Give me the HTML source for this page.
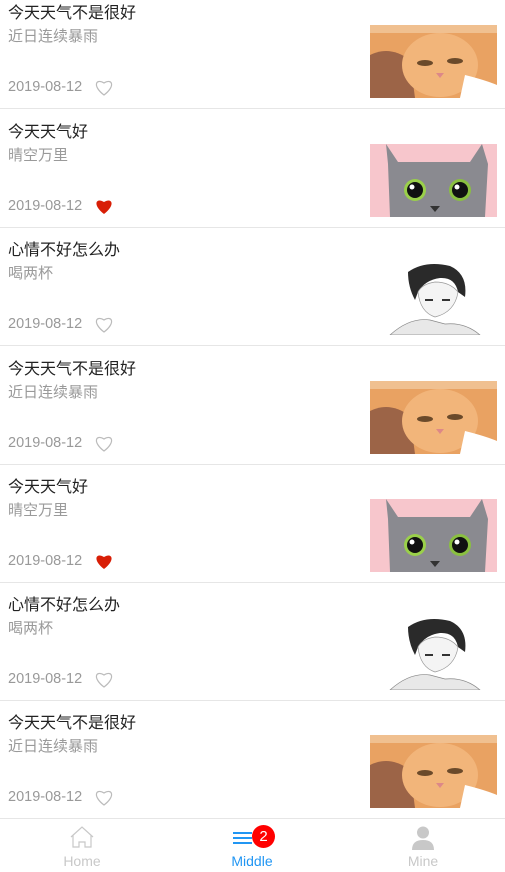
<!DOCTYPE html>
<html><head><meta charset="utf-8"><style>
*{margin:0;padding:0;box-sizing:border-box}
body{width:505px;height:872px;overflow:hidden;background:#fff;font-family:"Liberation Sans","Noto Sans CJK SC",sans-serif;position:relative}
.it{position:absolute;left:0;width:505px;height:118px;border-bottom:1px solid #e6e6e6}
.t{position:absolute;left:8px;top:12px;font-size:16px;color:#222;line-height:22px}
.s{position:absolute;left:8px;top:36px;font-size:15px;color:#9a9a9a;line-height:20px}
.d{position:absolute;left:8px;top:87px;font-size:14.5px;color:#999;line-height:18px}
.h{position:absolute;left:94px;top:87px;width:20px;height:18px}
.im{position:absolute;left:370px;top:34px;width:127px;height:73px}
.tab{position:absolute;top:818px;left:0;width:505px;height:54px;border-top:1px solid #e6e6e6;background:#fff}
.tl{position:absolute;top:34px;font-size:14px;width:120px;text-align:center}
</style></head><body>
<svg width="0" height="0" style="position:absolute">
<defs>
<symbol id="ca" viewBox="0 0 127 73"><rect width="127" height="73" fill="#e9a262"/><path d="M0 30 Q20 20 40 35 L45 73 L0 73Z" fill="#9c6447"/><ellipse cx="70" cy="40" rx="38" ry="32" fill="#f2b57a"/><path d="M95 50 Q115 55 127 60 L127 73 L90 73Z" fill="#fff"/><ellipse cx="55" cy="38" rx="8" ry="3" fill="#6b4a2a"/><ellipse cx="85" cy="36" rx="8" ry="3" fill="#6b4a2a"/><path d="M66 48 L74 48 L70 53Z" fill="#d88"/><rect x="0" y="0" width="127" height="8" fill="#f0c090"/></symbol>
<symbol id="cb" viewBox="0 0 127 73"><rect width="127" height="73" fill="#f7c6cc"/><path d="M16 0 L28 18 L100 18 L112 0 L118 20 L115 73 L20 73 L18 20Z" fill="#8a8a90"/><circle cx="45" cy="46" r="11" fill="#9ad04a"/><circle cx="45" cy="46" r="8" fill="#111"/><circle cx="90" cy="46" r="11" fill="#8ac040"/><circle cx="90" cy="46" r="8" fill="#111"/><circle cx="42" cy="43" r="2.5" fill="#fff"/><circle cx="87" cy="43" r="2.5" fill="#fff"/><path d="M60 62 L70 62 L65 68Z" fill="#333"/></symbol>
<symbol id="cc" viewBox="0 0 127 73"><rect width="127" height="73" fill="#fff"/><path d="M38 10 Q55 -2 80 4 Q98 12 95 35 L88 30 Q85 15 70 16 Q55 18 48 30 L45 38 Q38 25 38 10Z" fill="#2a2a2a"/><path d="M48 30 Q50 50 65 55 Q85 50 88 30 Q80 20 65 20 Q52 22 48 30Z" fill="#f4f4f4" stroke="#999" stroke-width="0.7"/><path d="M20 73 Q40 55 60 58 L75 62 Q95 60 110 73Z" fill="#e8e8e8" stroke="#888" stroke-width="0.7"/><path d="M55 38 h8 M72 38 h8" stroke="#333" stroke-width="2"/></symbol>
<symbol id="ho" viewBox="0 0 20 18"><path d="M10 17 C-2 8 2 0 10 5 C18 0 22 8 10 17Z"/></symbol>
</defs></svg>

<div class="it" style="top:-9px"><div class="t">今天天气不是很好</div><div class="s">近日连续暴雨</div><div class="d">2019-08-12</div><svg class="h" viewBox="0 0 20 18"><use href="#ho" fill="none" stroke="#bbb" stroke-width="1.2"/></svg><svg class="im"><use href="#ca"/></svg></div>
<div class="it" style="top:110px"><div class="t">今天天气好</div><div class="s">晴空万里</div><div class="d">2019-08-12</div><svg class="h" viewBox="0 0 20 18"><use href="#ho" fill="#d81e06"/></svg><svg class="im"><use href="#cb"/></svg></div>
<div class="it" style="top:228px"><div class="t">心情不好怎么办</div><div class="s">喝两杯</div><div class="d">2019-08-12</div><svg class="h" viewBox="0 0 20 18"><use href="#ho" fill="none" stroke="#bbb" stroke-width="1.2"/></svg><svg class="im"><use href="#cc"/></svg></div>
<div class="it" style="top:347px"><div class="t">今天天气不是很好</div><div class="s">近日连续暴雨</div><div class="d">2019-08-12</div><svg class="h" viewBox="0 0 20 18"><use href="#ho" fill="none" stroke="#bbb" stroke-width="1.2"/></svg><svg class="im"><use href="#ca"/></svg></div>
<div class="it" style="top:465px"><div class="t">今天天气好</div><div class="s">晴空万里</div><div class="d">2019-08-12</div><svg class="h" viewBox="0 0 20 18"><use href="#ho" fill="#d81e06"/></svg><svg class="im"><use href="#cb"/></svg></div>
<div class="it" style="top:583px"><div class="t">心情不好怎么办</div><div class="s">喝两杯</div><div class="d">2019-08-12</div><svg class="h" viewBox="0 0 20 18"><use href="#ho" fill="none" stroke="#bbb" stroke-width="1.2"/></svg><svg class="im"><use href="#cc"/></svg></div>
<div class="it" style="top:701px"><div class="t">今天天气不是很好</div><div class="s">近日连续暴雨</div><div class="d">2019-08-12</div><svg class="h" viewBox="0 0 20 18"><use href="#ho" fill="none" stroke="#bbb" stroke-width="1.2"/></svg><svg class="im"><use href="#ca"/></svg></div>

<div class="tab">
<svg style="position:absolute;left:70px;top:7px" width="24" height="22" viewBox="0 0 24 22"><path d="M1 11 L12 1 L23 11 M3 9 V21 H9 V16 H15 V21 H21 V9" fill="none" stroke="#c8c8c8" stroke-width="1.2"/></svg>
<div class="tl" style="left:22px;color:#c8c8c8">Home</div>
<svg style="position:absolute;left:233px;top:13px" width="19" height="12"><path d="M0 1 H19 M0 6 H19 M0 11 H19" stroke="#2196f3" stroke-width="2"/></svg>
<div style="position:absolute;left:252px;top:6px;width:23px;height:23px;border-radius:50%;background:#f00;color:#fff;font-size:15px;text-align:center;line-height:23px">2</div>
<div class="tl" style="left:192px;color:#2196f3">Middle</div>
<svg style="position:absolute;left:412px;top:7px" width="22" height="24" viewBox="0 0 22 24"><circle cx="11" cy="6.5" r="6" fill="#c8c8c8"/><path d="M0 24 Q0 14 11 14 Q22 14 22 24Z" fill="#c8c8c8"/></svg>
<div class="tl" style="left:363px;color:#c8c8c8">Mine</div>
</div>
</body></html>
